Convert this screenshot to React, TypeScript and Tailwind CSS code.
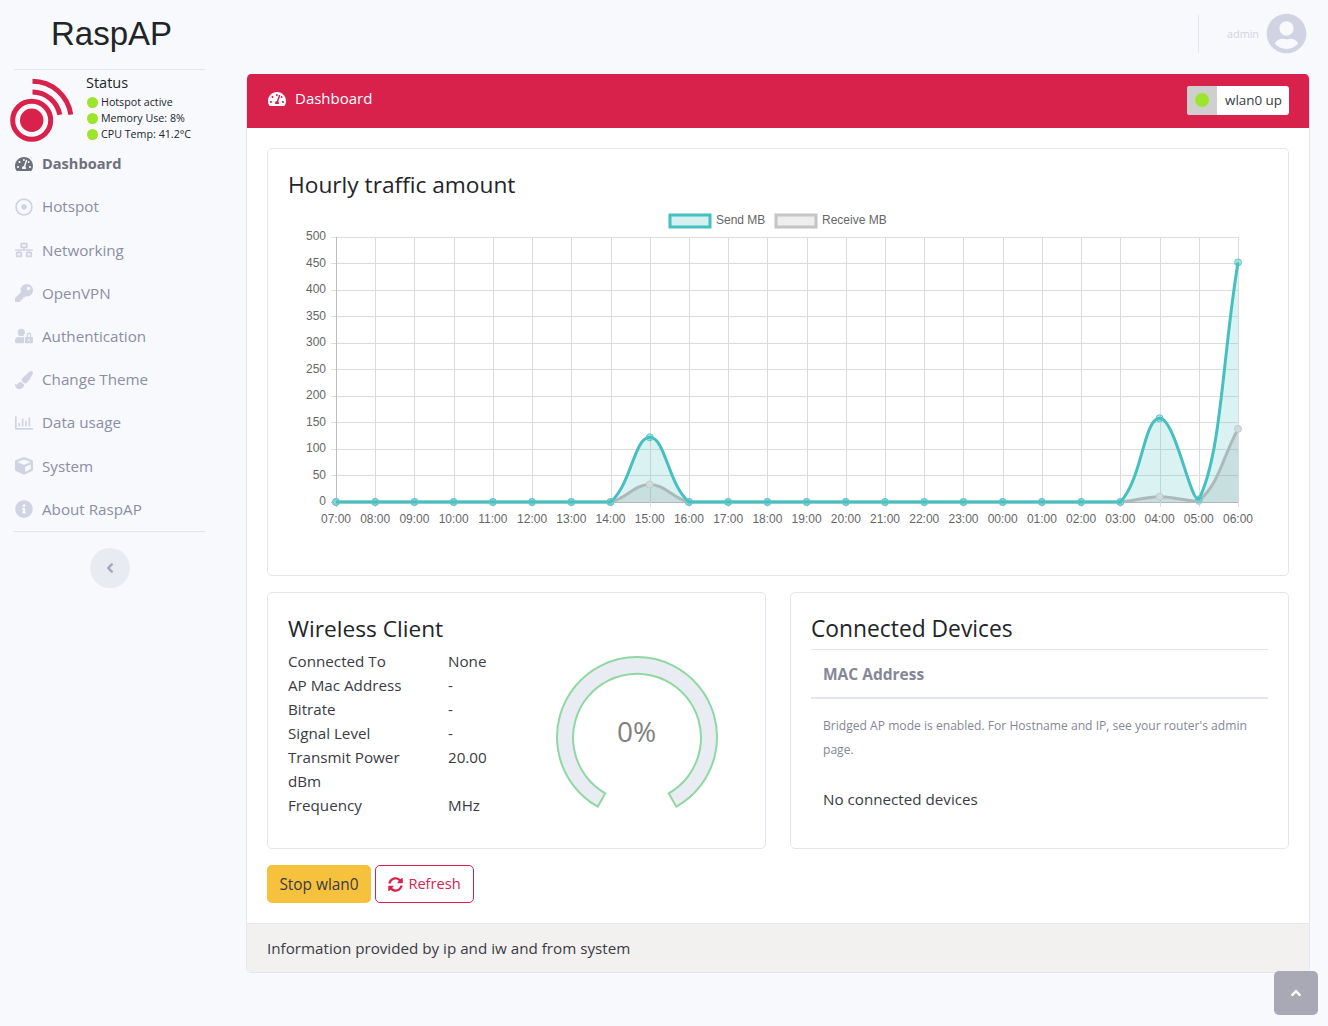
import {
  FaTachometerAlt, FaRegDotCircle, FaNetworkWired, FaKey, FaUserLock, FaPaintBrush,
  FaRegChartBar, FaCube, FaInfoCircle, FaAngleLeft, FaAngleUp, FaUserCircle, FaSyncAlt,
} from "react-icons/fa";

const navItems = [
  { label: "Dashboard", icon: FaTachometerAlt, active: true },
  { label: "Hotspot", icon: FaRegDotCircle },
  { label: "Networking", icon: FaNetworkWired },
  { label: "OpenVPN", icon: FaKey },
  { label: "Authentication", icon: FaUserLock },
  { label: "Change Theme", icon: FaPaintBrush },
  { label: "Data usage", icon: FaRegChartBar },
  { label: "System", icon: FaCube },
  { label: "About RaspAP", icon: FaInfoCircle },
];

const hours = ["07:00", "08:00", "09:00", "10:00", "11:00", "12:00", "13:00", "14:00", "15:00", "16:00", "17:00", "18:00", "19:00", "20:00", "21:00", "22:00", "23:00", "00:00", "01:00", "02:00", "03:00", "04:00", "05:00", "06:00"];
const sendMb = hours.map((_, i) => ({ 8: 122, 21: 158, 22: 5, 23: 452 } as Record<number, number>)[i] ?? 0);
const recvMb = hours.map((_, i) => ({ 8: 33, 21: 10, 22: 2, 23: 138 } as Record<number, number>)[i] ?? 0);

const X0 = 336;
const XSTEP = (1238 - 336) / 23;
const Y0 = 502;
const yOf = (v: number) => Y0 - (v / 500) * 265;

// same bezier as chart.js with tension 0.4, control points capped to the chart area
function splinePath(values: number[]) {
  const pts = values.map((v, i) => ({ x: X0 + i * XSTEP, y: yOf(v) }));
  const ctrl = pts.map((p, i) => {
    const a = pts[Math.max(i - 1, 0)];
    const b = pts[Math.min(i + 1, pts.length - 1)];
    const d01 = Math.hypot(p.x - a.x, p.y - a.y);
    const d12 = Math.hypot(b.x - p.x, b.y - p.y);
    const total = d01 + d12 || 1;
    const fa = (0.4 * d01) / total;
    const fb = (0.4 * d12) / total;
    return {
      px: p.x - fa * (b.x - a.x),
      py: Math.min(p.y - fa * (b.y - a.y), Y0),
      nx: p.x + fb * (b.x - a.x),
      ny: Math.min(p.y + fb * (b.y - a.y), Y0),
    };
  });
  let d = `M${pts[0].x} ${pts[0].y}`;
  for (let i = 1; i < pts.length; i++) {
    d += ` C${ctrl[i - 1].nx} ${ctrl[i - 1].ny} ${ctrl[i].px} ${ctrl[i].py} ${pts[i].x} ${pts[i].y}`;
  }
  return { d, pts };
}

function TrafficChart() {
  const send = splinePath(sendMb);
  const recv = splinePath(recvMb);
  const closeArea = ` L1238 ${Y0} L${X0} ${Y0} Z`;
  return (
    <svg width="1020" height="340" viewBox="268 205 1020 340" className="block" fontFamily="'Liberation Sans', Arial, sans-serif" fontSize="12" fill="#666">
      <rect x="670" y="215" width="40" height="12" fill="#d5f0f0" stroke="#45bfbf" strokeWidth="3" />
      <text x="716" y="224">Send MB</text>
      <rect x="776" y="215" width="40" height="12" fill="#eeeeee" stroke="#c4c4c4" strokeWidth="3" />
      <text x="822" y="224">Receive MB</text>

      {[500, 450, 400, 350, 300, 250, 200, 150, 100, 50, 0].map((v) => (
        <g key={v}>
          <line x1="331" x2="1238" y1={Math.floor(yOf(v)) + 0.5} y2={Math.floor(yOf(v)) + 0.5} stroke={v === 0 ? "#b5b5b5" : "#dcdcdc"} />
          <text x="326" y={yOf(v) + 3} textAnchor="end">{v}</text>
        </g>
      ))}
      {hours.map((h, i) => (
        <g key={h}>
          <line x1={Math.round(X0 + i * XSTEP) + 0.5} x2={Math.round(X0 + i * XSTEP) + 0.5} y1="237" y2="507" stroke={i === 0 ? "#bdbdbd" : "#dcdcdc"} />
          <text x={X0 + i * XSTEP} y="523" textAnchor="middle">{h}</text>
        </g>
      ))}

      <path d={recv.d + closeArea} fill="rgba(140,140,140,0.2)" />
      <path d={send.d + closeArea} fill="rgba(69,191,191,0.2)" />
      <path d={recv.d} fill="none" stroke="#adb9b9" strokeWidth="3" />
      {recv.pts.map((p, i) => (
        <circle key={i} cx={p.x} cy={p.y} r="3.5" fill="#cfdcdc" stroke="#c2cccc" />
      ))}
      <path d={send.d} fill="none" stroke="#45bfbf" strokeWidth="3" />
      {send.pts.map((p, i) => (
        <circle key={i} cx={p.x} cy={p.y} r="3.5" fill="rgba(69,191,191,0.45)" stroke="#5cc8c8" />
      ))}
    </svg>
  );
}

function Gauge() {
  return (
    <svg width="170" height="160" viewBox="552 652 170 160" className="block">
      <path
        d="M597.7 805.7 A80 80 0 1 1 676.3 805.7 L668.7 792.3 A64 64 0 1 0 605.3 792.3 Z"
        fill="#e9ecf3"
        stroke="#8fd8a4"
        strokeWidth="2"
      />
      <text x="636.5" y="741" textAnchor="middle" fontSize="28" fill="#808080" fontFamily="'Open Sans', sans-serif">0%</text>
    </svg>
  );
}

function LogoMark() {
  return (
    <svg width="75" height="75" viewBox="5 72 75 75" className="block shrink-0" fill="none" stroke="#d8224c">
      <path d="M32.5 81.2 A38.8 38.8 0 0 1 70.8 114.7" strokeWidth="5" />
      <path d="M32.5 92 A28 28 0 0 1 59.8 114.7" strokeWidth="5" />
      <circle cx="31.7" cy="120.3" r="19" strokeWidth="5" />
      <circle cx="31.7" cy="120.3" r="11.7" fill="#d8224c" stroke="none" />
    </svg>
  );
}

function StatusLine({ text }: { text: string }) {
  return (
    <div className="flex items-center gap-[3px] h-4 text-[10.7px] text-[#212529]">
      <span className="w-[11px] h-[11px] rounded-full bg-[#9de52d] shrink-0" />
      {text}
    </div>
  );
}

function Sidebar() {
  return (
    <aside className="w-[224px] shrink-0">
      <div className="h-[69px] pb-[1px] pr-[1px] flex items-center justify-center text-[33px] text-[#212529] font-['Liberation_Sans',sans-serif]">RaspAP</div>
      <div className="mx-[14px] w-[191px] border-t border-[#e3e6f0] flex items-start pt-0 -mb-px">
        <div className="-ml-[9px] mt-[2px]"><LogoMark /></div>
        <div className="ml-[7px] pt-[4px]">
          <div className="text-[14.5px] leading-[18px] mb-[2px] -ml-px text-[#212529]">Status</div>
          <StatusLine text="Hotspot active" />
          <StatusLine text="Memory Use: 8%" />
          <StatusLine text="CPU Temp: 41.2°C" />
        </div>
      </div>
      <nav className="-mt-[5px]">
        {navItems.map(({ label, icon: Icon, active }) => (
          <div key={label} className={`h-[43.2px] pl-[14px] flex items-center ${active ? "text-[14.6px] font-bold text-[#6e707e]" : "text-[15.2px] text-[#8b8ea6]"}`}>
            <span className="w-[20px] flex justify-center mr-[8px]">
              <Icon className={`text-[18px] ${active ? "text-[#6e707e]" : "text-[#d1d3e2]"}`} />
            </span>
            {label}
          </div>
        ))}
      </nav>
      <div className="mx-[14px] w-[191px] border-t border-[#e3e6f0]" />
      <div className="mt-[16px] flex justify-center pr-[8px] pl-[4px]">
        <div className="w-10 h-10 rounded-full bg-[#e9ebf3] flex items-center justify-center text-[#a7a9bd]">
          <FaAngleLeft className="text-[16px]" />
        </div>
      </div>
    </aside>
  );
}

function InnerCard({ children, className = "" }: { children: React.ReactNode; className?: string }) {
  return <div className={`bg-white border border-[#e3e6f0] rounded-[5px] ${className}`}>{children}</div>;
}

const clientRows = [
  ["Connected To", "None"],
  ["AP Mac Address", "-"],
  ["Bitrate", "-"],
  ["Signal Level", "-"],
  ["Transmit Power", "20.00"],
  ["dBm", ""],
  ["Frequency", "MHz"],
];

export default function App() {
  return (
    <div className="min-h-[1026px] bg-[#f8f9fc] flex font-['Open_Sans',sans-serif] text-[15.2px] text-[#3a3b45] overflow-hidden">
      <Sidebar />
      <main className="flex-1 min-w-0 pl-[23px] pr-[19px]">
        <header className="h-[74px] flex items-start justify-end">
          <div className="mt-[15px] h-[38px] border-l border-[#e3e6f0] mr-[28px]" />
          <span className="mt-[26px] text-[10.8px] text-[#d1d3e2] mr-[7px]">admin</span>
          <FaUserCircle className="mt-[13px] text-[41px] text-[#d1d3e2] mr-[2px]" />
        </header>

        <section className="rounded-[5px] border border-t-0 border-[#e3e6f0] overflow-hidden bg-white -ml-px -mr-px">
          <div className="h-[54px] bg-[#d8224c] text-white flex items-center justify-between pl-[21px] pr-[20px] pb-[2px]">
            <div className="flex items-center gap-[9px] pb-[3px]">
              <FaTachometerAlt className="text-[18px]" />
              <span className="text-[15px]">Dashboard</span>
            </div>
            <div className="h-[29px] w-[102px] bg-white rounded-[3px] overflow-hidden flex items-center text-[#3a3b45] text-[13.4px]">
              <span className="w-[30px] h-full bg-[#cfcfcf] flex items-center justify-center">
                <span className="w-[14px] h-[14px] rounded-full bg-[#9de52d]" />
              </span>
              <span className="pl-2">wlan0 up</span>
            </div>
          </div>

          <div className="p-5 pb-0">
            <InnerCard className="h-[428px]">
              <h2 className="pl-5 pt-[20px] h-[56px] text-[22.7px] leading-[32px] text-[#212529]">Hourly traffic amount</h2>
              <TrafficChart />
            </InnerCard>

            <div className="mt-4 grid grid-cols-2 gap-6">
              <InnerCard className="h-[257px] px-5 pt-[20px] flex">
                <div className="w-[240px] shrink-0">
                  <h2 className="text-[22.7px] leading-[32px] mb-[4px] text-[#212529]">Wireless Client</h2>
                  <div className="grid grid-cols-[160px_1fr] leading-6">
                    {clientRows.map(([k, v]) => (
                      <div key={k} className="contents">
                        <span>{k}</span>
                        <span>{v}</span>
                      </div>
                    ))}
                  </div>
                </div>
                <div className="ml-[24px] mt-[40px]"><Gauge /></div>
              </InnerCard>

              <InnerCard className="h-[257px] px-5 pt-[20px]">
                <h2 className="text-[22.8px] leading-[32px] pb-[4px] text-[#212529] border-b border-[#e3e6f0]">Connected Devices</h2>
                <div className="px-3 pt-[2px] h-[49px] flex items-center text-[15.5px] font-bold text-[#858796] border-b-2 border-[#e3e6f0]">MAC Address</div>
                <p className="px-3 mt-[15px] text-[12.1px] leading-6 text-[#858796]">Bridged AP mode is enabled. For Hostname and IP, see your router's admin page.</p>
                <p className="px-3 mt-[25px] leading-6 text-[#3a3b45]">No connected devices</p>
              </InnerCard>
            </div>

            <div className="mt-4 pb-5 flex gap-1">
              <button className="h-[38px] w-[104px] pt-[1px] rounded-[5px] bg-[#f6c23e] text-[15.4px] text-[#3a3b45]">Stop wlan0</button>
              <button className="h-[38px] w-[99px] rounded-[5px] border border-[#d8224c] text-[14.6px] text-[#d8224c] flex items-center justify-center gap-[5px]">
                <FaSyncAlt className="text-[15px]" />
                Refresh
              </button>
            </div>
          </div>

          <div className="h-[49px] bg-[#f2f1f0] border-t border-[#e3e6f0] pl-5 flex items-center text-[#3a3b45]">
            Information provided by ip and iw and from system
          </div>
        </section>
      </main>

      <div className="fixed left-[1274px] top-[971px] w-11 h-11 rounded-[5px] bg-[#a8a9b4] flex items-center justify-center text-white">
        <FaAngleUp className="text-[16px]" />
      </div>
    </div>
  );
}
